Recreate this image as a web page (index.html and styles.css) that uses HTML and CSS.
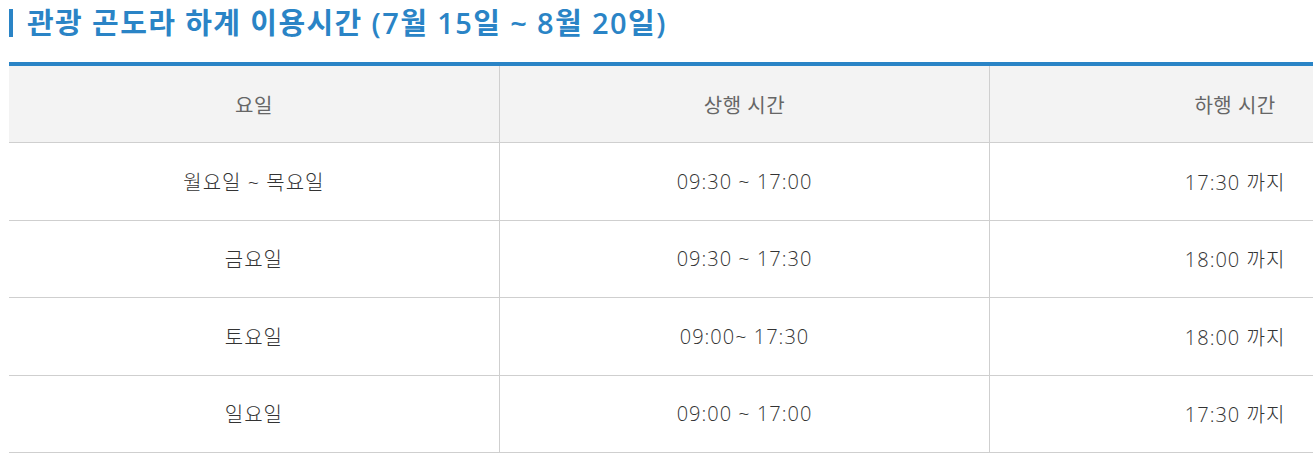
FILE: index.html
```html
<!DOCTYPE html>
<html lang="ko">
<head>
<meta charset="utf-8">
<link rel="stylesheet" href="styles.css">
</head>
<body>
<div class="page">
  <h2 class="title">관광 곤도라 하계 이용시간 (7월 15일 ~ 8월 20일)</h2>
  <table class="schedule">
    <colgroup><col><col><col></colgroup>
    <thead>
      <tr><th>요일</th><th>상행 시간</th><th>하행 시간</th></tr>
    </thead>
    <tbody>
      <tr><td>월요일 ~ 목요일</td><td>09:30 ~ 17:00</td><td>17:30 까지</td></tr>
      <tr><td>금요일</td><td>09:30 ~ 17:30</td><td>18:00 까지</td></tr>
      <tr><td>토요일</td><td>09:00~ 17:30</td><td>18:00 까지</td></tr>
      <tr><td>일요일</td><td>09:00 ~ 17:00</td><td>17:30 까지</td></tr>
    </tbody>
  </table>
</div>
</body>
</html>
```
FILE: styles.css
```css
html, body {
  margin: 0;
  padding: 0;
  overflow: hidden;
  background: #fff;
}
body {
  font-family: "Open Sans", "Noto Sans CJK KR", sans-serif;
}
.page {
  padding: 9px 0 0 9px;
  width: 1480px;
}
.title {
  margin: 0;
  height: 28px;
  display: flex;
  align-items: center;
  border-left: 4px solid #2a84c6;
  padding-left: 14px;
  font-size: 29px;
  font-weight: 600;
  color: #2a84c6;
  line-height: 28px;
  letter-spacing: 1.4px;
}
.schedule {
  margin-top: 25px;
  width: 1471px;
  table-layout: fixed;
  border-collapse: collapse;
  border-top: 4px solid #2a84c6;
}
.schedule th,
.schedule td {
  height: 76.5px;
  padding: 0;
  text-align: center;
  vertical-align: middle;
  border-bottom: 1px solid #cfcfcf;
  border-left: 1px solid #cfcfcf;
}
.schedule th:first-child,
.schedule td:first-child {
  border-left: none;
}
.schedule th {
  height: 76px;
  background: #f3f3f3;
  color: #666;
  font-size: 20px;
  font-weight: 400;
  letter-spacing: 0.5px;
}
.schedule td {
  color: #333;
  font-size: 20px;
  font-weight: 300;
  letter-spacing: 1px;
}
```
